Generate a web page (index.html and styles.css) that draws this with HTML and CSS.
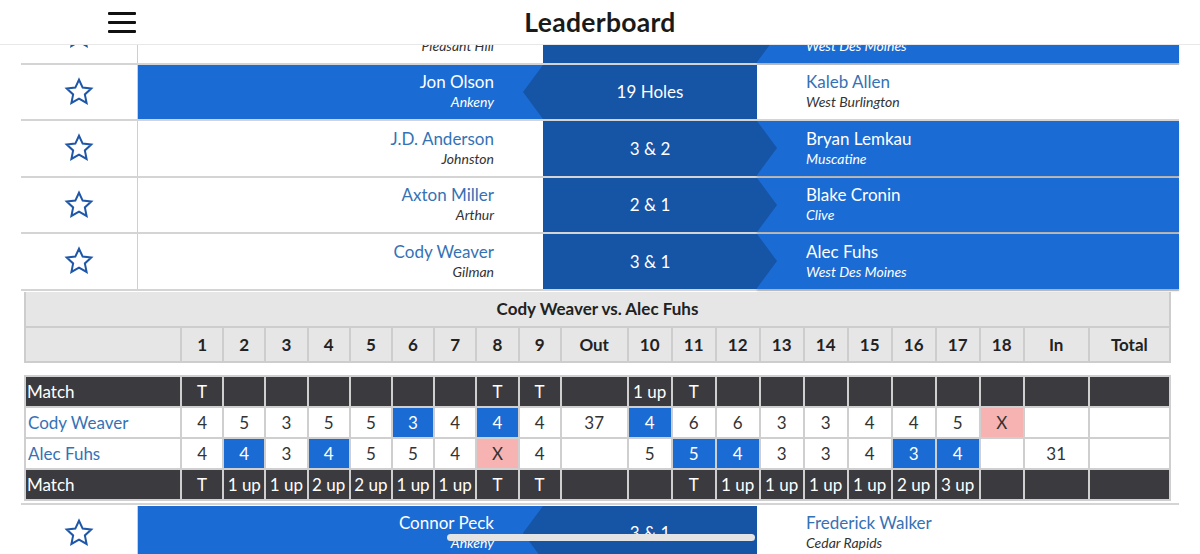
FILE: index.html
```html
<!DOCTYPE html>
<html>
<head>
<meta charset="utf-8">
<title>Leaderboard</title>
<link rel="stylesheet" href="styles.css">
</head>
<body>
<header class="topbar">
  <div class="hamburger"><span></span><span></span><span></span></div>
  <h1 class="title">Leaderboard</h1>
</header>

<main class="board">
  <div class="match right-win">
    <div class="fav"><svg class="star" viewBox="0 0 24 24"><path d="M12 2.8l2.75 5.9 6.45.75-4.8 4.4 1.3 6.35L12 17l-5.7 3.2 1.3-6.35-4.8-4.4 6.45-.75z"/></svg></div>
    <div class="player left"><span class="name">Tyler Hoppe</span><span class="city">Pleasant Hill</span></div>
    <div class="result">4 &amp; 3</div>
    <div class="player right"><span class="name">Jack Smith</span><span class="city">West Des Moines</span></div>
  </div>
  <div class="match left-win">
    <div class="fav"><svg class="star" viewBox="0 0 24 24"><path d="M12 2.8l2.75 5.9 6.45.75-4.8 4.4 1.3 6.35L12 17l-5.7 3.2 1.3-6.35-4.8-4.4 6.45-.75z"/></svg></div>
    <div class="player left"><span class="name">Jon Olson</span><span class="city">Ankeny</span></div>
    <div class="result">19 Holes</div>
    <div class="player right"><span class="name">Kaleb Allen</span><span class="city">West Burlington</span></div>
  </div>
  <div class="match right-win">
    <div class="fav"><svg class="star" viewBox="0 0 24 24"><path d="M12 2.8l2.75 5.9 6.45.75-4.8 4.4 1.3 6.35L12 17l-5.7 3.2 1.3-6.35-4.8-4.4 6.45-.75z"/></svg></div>
    <div class="player left"><span class="name">J.D. Anderson</span><span class="city">Johnston</span></div>
    <div class="result">3 &amp; 2</div>
    <div class="player right"><span class="name">Bryan Lemkau</span><span class="city">Muscatine</span></div>
  </div>
  <div class="match right-win">
    <div class="fav"><svg class="star" viewBox="0 0 24 24"><path d="M12 2.8l2.75 5.9 6.45.75-4.8 4.4 1.3 6.35L12 17l-5.7 3.2 1.3-6.35-4.8-4.4 6.45-.75z"/></svg></div>
    <div class="player left"><span class="name">Axton Miller</span><span class="city">Arthur</span></div>
    <div class="result">2 &amp; 1</div>
    <div class="player right"><span class="name">Blake Cronin</span><span class="city">Clive</span></div>
  </div>
  <div class="match right-win">
    <div class="fav"><svg class="star" viewBox="0 0 24 24"><path d="M12 2.8l2.75 5.9 6.45.75-4.8 4.4 1.3 6.35L12 17l-5.7 3.2 1.3-6.35-4.8-4.4 6.45-.75z"/></svg></div>
    <div class="player left"><span class="name">Cody Weaver</span><span class="city">Gilman</span></div>
    <div class="result">3 &amp; 1</div>
    <div class="player right"><span class="name">Alec Fuhs</span><span class="city">West Des Moines</span></div>
  </div>

  <section class="scorecard">
    <table class="sc-head">
      <colgroup>
        <col class="c-label"><col class="c-h"><col class="c-h"><col class="c-h"><col class="c-h"><col class="c-h"><col class="c-h"><col class="c-h"><col class="c-h"><col class="c-h"><col class="c-out"><col class="c-b"><col class="c-b"><col class="c-b"><col class="c-b"><col class="c-b"><col class="c-b"><col class="c-b"><col class="c-b"><col class="c-b"><col class="c-in"><col class="c-total">
      </colgroup>
      <tr class="sc-title"><th colspan="22">Cody Weaver vs. Alec Fuhs</th></tr>
      <tr class="sc-holes">
        <th></th><th>1</th><th>2</th><th>3</th><th>4</th><th>5</th><th>6</th><th>7</th><th>8</th><th>9</th><th>Out</th><th>10</th><th>11</th><th>12</th><th>13</th><th>14</th><th>15</th><th>16</th><th>17</th><th>18</th><th>In</th><th>Total</th>
      </tr>
    </table>
    <table class="sc-body">
      <colgroup>
        <col class="c-label"><col class="c-h"><col class="c-h"><col class="c-h"><col class="c-h"><col class="c-h"><col class="c-h"><col class="c-h"><col class="c-h"><col class="c-h"><col class="c-out"><col class="c-b"><col class="c-b"><col class="c-b"><col class="c-b"><col class="c-b"><col class="c-b"><col class="c-b"><col class="c-b"><col class="c-b"><col class="c-in"><col class="c-total">
      </colgroup>
      <tr class="status">
        <td class="label">Match</td><td>T</td><td></td><td></td><td></td><td></td><td></td><td></td><td>T</td><td>T</td><td></td><td>1 up</td><td>T</td><td></td><td></td><td></td><td></td><td></td><td></td><td></td><td></td><td></td>
      </tr>
      <tr class="scores">
        <td class="label pname">Cody Weaver</td><td>4</td><td>5</td><td>3</td><td>5</td><td>5</td><td class="win">3</td><td>4</td><td class="win">4</td><td>4</td><td>37</td><td class="win">4</td><td>6</td><td>6</td><td>3</td><td>3</td><td>4</td><td>4</td><td>5</td><td class="pick">X</td><td></td><td></td>
      </tr>
      <tr class="scores">
        <td class="label pname">Alec Fuhs</td><td>4</td><td class="win">4</td><td>3</td><td class="win">4</td><td>5</td><td>5</td><td>4</td><td class="pick">X</td><td>4</td><td></td><td>5</td><td class="win">5</td><td class="win">4</td><td>3</td><td>3</td><td>4</td><td class="win">3</td><td class="win">4</td><td></td><td>31</td><td></td>
      </tr>
      <tr class="status">
        <td class="label">Match</td><td>T</td><td>1 up</td><td>1 up</td><td>2 up</td><td>2 up</td><td>1 up</td><td>1 up</td><td>T</td><td>T</td><td></td><td></td><td>T</td><td>1 up</td><td>1 up</td><td>1 up</td><td>1 up</td><td>2 up</td><td>3 up</td><td></td><td></td><td></td>
      </tr>
    </table>
  </section>

  <div class="match left-win after-card">
    <div class="fav"><svg class="star" viewBox="0 0 24 24"><path d="M12 2.8l2.75 5.9 6.45.75-4.8 4.4 1.3 6.35L12 17l-5.7 3.2 1.3-6.35-4.8-4.4 6.45-.75z"/></svg></div>
    <div class="player left"><span class="name">Connor Peck</span><span class="city">Ankeny</span></div>
    <div class="result">3 &amp; 1</div>
    <div class="player right"><span class="name">Frederick Walker</span><span class="city">Cedar Rapids</span></div>
  </div>
</main>

<div class="home-indicator"></div>
</body>
</html>
```

FILE: styles.css
```css
html, body {
  margin: 0;
  padding: 0;
  background: #ffffff;
  font-family: "Lato", "Open Sans", sans-serif;
  color: #333;
  overflow: hidden;
}

.topbar {
  position: fixed;
  top: 0;
  left: 0;
  right: 0;
  height: 44px;
  background: #fff;
  border-bottom: 1px solid #e8e8e8;
  z-index: 10;
  display: flex;
  align-items: center;
  justify-content: center;
}

.hamburger {
  position: absolute;
  left: 108px;
  top: 12px;
  width: 28px;
  display: flex;
  flex-direction: column;
  gap: 6px;
}
.hamburger span {
  display: block;
  height: 3px;
  background: #111;
  border-radius: 1px;
}

.title {
  margin: 0;
  font-size: 26.5px;
  font-weight: 700;
  color: #1a1a1a;
  letter-spacing: 0.3px;
}

.board {
  padding-top: 8px;
}

.match {
  display: flex;
  height: 54.5px;
  margin: 0 21px;
  border-bottom: 2px solid #d4d4d4;
  position: relative;
}

.fav {
  width: 116px;
  flex: none;
  border-right: 1px solid #cfcfcf;
  display: flex;
  align-items: center;
  justify-content: center;
}
.star {
  width: 32px;
  height: 32px;
  fill: none;
  stroke: #1e56a8;
  stroke-width: 1.5;
  stroke-linejoin: miter;
}

.player {
  display: flex;
  flex-direction: column;
  justify-content: center;
  background: #fff;
}
.player.left {
  width: 356px;
  flex: none;
  align-items: flex-end;
  padding-right: 49px;
  text-align: right;
}
.player.right {
  flex: 1;
  padding-left: 49px;
}
.name {
  font-size: 17px;
  color: #3572b5;
  line-height: 21px;
}
.city {
  font-size: 14px;
  font-style: italic;
  color: #333;
  line-height: 20px;
}

.result {
  width: 214px;
  flex: none;
  background: #1654a6;
  color: #fff;
  font-size: 17px;
  display: flex;
  align-items: center;
  justify-content: center;
  position: relative;
  z-index: 2;
}

.left-win .player.left,
.right-win .player.right {
  background: #1a6bd3;
}
.left-win .player.left .name,
.left-win .player.left .city,
.right-win .player.right .name,
.right-win .player.right .city {
  color: #fff;
}
.right-win .player.right {
  box-shadow: 0 2px 2px rgba(0,0,0,0.18);
}

.left-win .result::before {
  content: "";
  position: absolute;
  left: -20px;
  top: 0;
  border-top: 27.25px solid transparent;
  border-bottom: 27.25px solid transparent;
  border-right: 20px solid #1654a6;
}
.right-win .result::after {
  content: "";
  position: absolute;
  right: -20px;
  top: 0;
  border-top: 27.25px solid transparent;
  border-bottom: 27.25px solid transparent;
  border-left: 20px solid #1654a6;
}

.scorecard {
  margin: 0 21px;
  padding: 1px 0 2px 3px;
  border-bottom: 2px solid #d4d4d4;
}

table {
  border-collapse: collapse;
  table-layout: fixed;
  width: 1145px;
}
.c-label { width: 156px; }
.c-h { width: 42.2px; }
.c-out { width: 67px; }
.c-b { width: 44px; }
.c-in { width: 65px; }
.c-total { width: 81px; }

.sc-head th {
  background: #e6e6e6;
  border: 2px solid #cdcdcd;
  font-size: 17px;
  font-weight: 700;
  color: #222;
  padding: 0;
}
.sc-title th {
  height: 34px;
  border-top: 0;
}
.sc-holes th {
  height: 33px;
}

.sc-body {
  margin-top: 12px;
}
.sc-body td {
  border: 2px solid #cfcfcf;
  height: 29px;
  padding: 0;
  text-align: center;
  font-size: 17px;
  color: #333;
  white-space: nowrap;
}
.sc-body .status td {
  background: #3b3b3f;
  color: #fff;
}
.sc-body td.label {
  text-align: left;
  padding-left: 1px;
}
.sc-body td.pname {
  color: #3572b5;
  font-size: 17px;
  padding-left: 2px;
}
.sc-body td.win {
  background: #1a6bd3;
  color: #fff;
}
.sc-body td.pick {
  background: #f7b2b2;
  color: #333;
}

.after-card {
  margin-top: 1px;
}

.home-indicator {
  position: fixed;
  left: 447px;
  bottom: 13px;
  width: 308px;
  height: 7px;
  border-radius: 4px;
  background: #e4e4e4;
  z-index: 20;
}
```
